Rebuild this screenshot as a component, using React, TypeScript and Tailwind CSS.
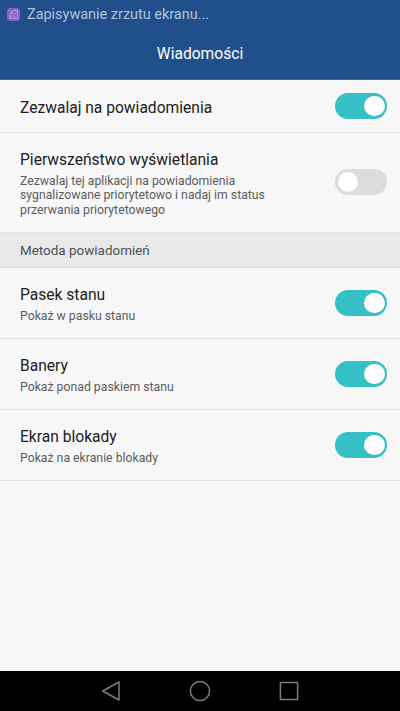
import { useState } from 'react'
import clsx from 'clsx'

type Item = { id: string; title: string; summary?: string[] }

const general: Item[] = [
  { id: 'allow', title: 'Zezwalaj na powiadomienia' },
  {
    id: 'priority',
    title: 'Pierwszeństwo wyświetlania',
    summary: ['Zezwalaj tej aplikacji na powiadomienia', 'sygnalizowane priorytetowo i nadaj im status', 'przerwania priorytetowego'],
  },
]

const methods: Item[] = [
  { id: 'status', title: 'Pasek stanu', summary: ['Pokaż w pasku stanu'] },
  { id: 'banners', title: 'Banery', summary: ['Pokaż ponad paskiem stanu'] },
  { id: 'lock', title: 'Ekran blokady', summary: ['Pokaż na ekranie blokady'] },
]

function Toggle({ on, label, onClick }: { on: boolean; label: string; onClick: () => void }) {
  return (
    <button
      role="switch"
      aria-checked={on}
      aria-label={label}
      onClick={onClick}
      className={clsx('flex h-[26px] w-[52px] shrink-0 items-center rounded-full px-[2.5px]', on ? 'justify-end bg-[#35c0c5]' : 'justify-start bg-[#dcdcdc]')}
    >
      <span className="size-[20.5px] rounded-full bg-white" />
    </button>
  )
}

function Row({ item, on, onToggle }: { item: Item; on: boolean; onToggle: () => void }) {
  return (
    <div
      className={clsx(
        'flex items-center justify-between border-b border-[#e3e3e3] pr-[13px] pl-5',
        !item.summary && 'h-[53px]',
        item.summary?.length === 1 && 'h-[71px]',
        item.summary?.length === 3 && 'h-[100px] pb-px',
      )}
    >
      <div className="pt-[3px]">
        <p className="text-[15.6px] leading-5 whitespace-nowrap text-[#212121]">{item.title}</p>
        {item.summary && (
          <p className="mt-1 text-[12.25px] leading-[14.5px] whitespace-nowrap text-[#5c5c5c]">
            {item.summary.map((line) => <span key={line} className="block">{line}</span>)}
          </p>
        )}
      </div>
      <Toggle on={on} label={item.title} onClick={onToggle} />
    </div>
  )
}

export default function App() {
  const [state, setState] = useState<Record<string, boolean>>({ allow: true, priority: false, status: true, banners: true, lock: true })
  const flip = (id: string) => setState((s) => ({ ...s, [id]: !s[id] }))
  return (
    <div className="flex h-[711px] w-[400px] flex-col overflow-hidden bg-[#f7f7f7] font-['Roboto',sans-serif]">
      <header className="h-20 border-b border-[#3b659b] bg-[#204f8c]">
        <div className="flex h-7 items-center gap-[7px] pl-[7px]">
          <svg width="13" height="13" viewBox="0 0 13 13" fill="none" stroke="#b9a0e4" strokeWidth=".8">
            <rect width="13" height="13" rx="3" fill="#8460c8" stroke="none" />
            <path d="M6 2.5h4.5v8h-8V6M2.5 2.5l3 3M5.5 3v2.5H3M10 3.5L7 7M3 9.5l2.5-2L9 10" />
          </svg>
          <span className="pt-0.5 text-[14.45px] leading-5 text-[#b2c2d8]">Zapisywanie zrzutu ekranu...</span>
        </div>
        <h1 className="flex h-[51px] items-center justify-center pt-[3px] text-[15.6px] text-white">Wiadomości</h1>
      </header>

      <main className="flex-1">
        {general.map((i) => <Row key={i.id} item={i} on={state[i.id]} onToggle={() => flip(i.id)} />)}
        <h2 className="flex h-[35px] items-center border-b border-[#dfdfdf] bg-[#e9e9e9] pt-[3px] pl-5 text-[13.45px] text-[#505050]">Metoda powiadomień</h2>
        {methods.map((i) => <Row key={i.id} item={i} on={state[i.id]} onToggle={() => flip(i.id)} />)}
      </main>

      <nav className="flex h-10 items-center justify-between bg-black px-[100px]">
        <button aria-label="Wstecz">
          <svg width="22" height="22" viewBox="0 0 22 22" fill="none" stroke="#7c7c7c" strokeWidth="1.5" strokeLinejoin="round">
            <path d="M19 2v18L2.7 11z" />
          </svg>
        </button>
        <button aria-label="Ekran główny">
          <svg width="22" height="22" viewBox="0 0 22 22" fill="none" stroke="#7c7c7c" strokeWidth="1.5">
            <circle cx="11" cy="11" r="9.6" />
          </svg>
        </button>
        <button aria-label="Ostatnie">
          <svg width="22" height="22" viewBox="0 0 22 22" fill="none" stroke="#7c7c7c" strokeWidth="1.5" strokeLinejoin="round">
            <rect x="2.4" y="2.4" width="17.2" height="17.2" />
          </svg>
        </button>
      </nav>
    </div>
  )
}
